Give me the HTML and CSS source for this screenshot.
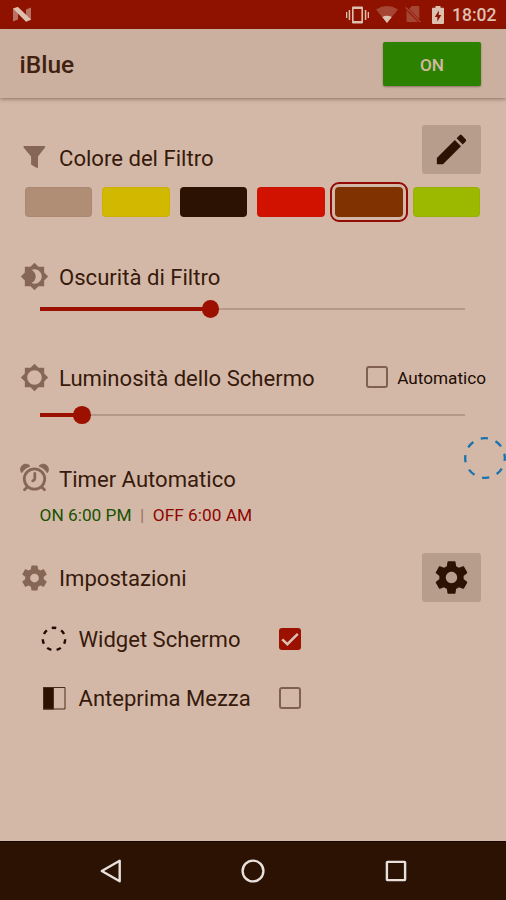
FILE: index.html
```html
<!DOCTYPE html>
<html lang="it">
<head>
<meta charset="utf-8">
<title>iBlue</title>
<link rel="stylesheet" href="styles.css">
</head>
<body>
<div class="screen">
  <div class="status">
    <svg class="n-logo" width="18" height="15" viewBox="0 0 18 15"><path opacity=".55" d="M0 1.5 5 0V12.500L0 14.500ZM13 2.500 18 .5V13L13 14.500Z"/><path d="M0 1.500 5 0 18 12.500 13 14.700Z"/></svg>
    <svg class="vib" width="23" height="18" viewBox="0 0 23 18"><path d="M0 6h1.300v6H0zM2.700 4H4.200v10H2.700zM18.800 4h1.500v10h-1.500zM21.700 6H23v6h-1.300z"/><path fill-rule="evenodd" d="M7 .5h9q1 0 1 1v15q0 1-1 1H7q-1 0-1-1v-15q0-1 1-1zM7.600 3v12h7.800V3z"/></svg>
    <svg class="wifi" width="22" height="17" viewBox="0 0 22 17"><path opacity=".3" d="M11 17 0 3.400Q11-3.400 22 3.400Z"/><path d="M11 17 6.200 11Q11 8.600 15.800 11Z"/></svg>
    <svg class="sim" width="16" height="17" viewBox="0 0 16 17"><path opacity=".3" d="M4 3 7 0h6q1.300 0 1.300 1.300V13.200ZM1.500 4.500 13 16H2.800Q1.500 16 1.500 14.700Z"/><path opacity=".3" d="M.2 1.900 1.200.9 15.800 15.500 14.800 16.500Z"/></svg>
    <svg class="batt" width="12" height="18" viewBox="0 0 12 18"><path fill-rule="evenodd" d="M3.500 0h5v1.800H11q1 0 1 1V17q0 1-1 1H1q-1 0-1-1V2.800q0-1 1-1h2.500zM6.800 4.600 2.800 11h2.500v4.600L9.400 9H6.800z"/></svg>
    <span class="clock">18:02</span>
  </div>
  <header class="bar">
    <h1>iBlue</h1>
    <button class="on">ON</button>
  </header>
  <main>
    <section class="color">
      <div class="row">
        <svg class="ico" width="30" height="30" viewBox="0 0 30 30"><path d="M4.500 4h20.300q1.700 0 .5 1.700L18.500 14.500V25.800H16.800L11.600 22.500V14.500L4.300 5.700Q3.200 4 4.500 4Z"/></svg>
        <h2>Colore del Filtro</h2>
        <button class="tool edit"><svg width="39" height="39" viewBox="0 0 24 24"><path d="M3 17.250V21h3.750L17.810 9.940l-3.750-3.750L3 17.250zM20.710 7.040c.39-.39.39-1.020 0-1.410l-2.340-2.340c-.39-.39-1.020-.39-1.410 0l-1.830 1.830 3.750 3.750 1.830-1.830z"/></svg></button>
      </div>
      <div class="swatches">
        <i class="sw tan"></i><i class="sw yellow"></i><i class="sw dark"></i><i class="sw red"></i><i class="sw brown selected"></i><i class="sw lime"></i>
      </div>
    </section>
    <section class="darkness">
      <div class="row">
        <svg class="ico" width="29" height="29" viewBox="0 0 24 24"><path d="M20 8.690V4h-4.690L12 .69 8.690 4H4v4.690L.69 12 4 15.310V20h4.690L12 23.310 15.310 20H20v-4.690L23.310 12 20 8.690zM12 18c-.89 0-1.740-.2-2.500-.55C11.560 16.500 13 14.420 13 12s-1.440-4.500-3.500-5.450C10.260 6.200 11.110 6 12 6c3.310 0 6 2.690 6 6s-2.690 6-6 6z"/></svg>
        <h2>Oscurità di Filtro</h2>
      </div>
      <div class="slider"><div class="fill" style="width:171px"></div><div class="thumb"></div><div class="rest"></div></div>
    </section>
    <section class="brightness">
      <div class="row">
        <svg class="ico" width="29" height="29" viewBox="0 0 24 24"><path d="M20 8.690V4h-4.690L12 .69 8.690 4H4v4.690L.69 12 4 15.310V20h4.690L12 23.310 15.310 20H20v-4.690L23.310 12 20 8.690zM12 18c-3.310 0-6-2.690-6-6s2.690-6 6-6 6 2.690 6 6-2.690 6-6 6z"/></svg>
        <h2>Luminosità dello Schermo</h2>
        <div class="auto"><i class="box"></i><span>Automatico</span></div>
      </div>
      <div class="slider"><div class="fill" style="width:42.500px"></div><div class="thumb"></div><div class="rest"></div></div>
    </section>
    <section class="timer">
      <div class="row">
        <svg class="ico" width="30" height="30" viewBox="0 0 30 30"><g fill="none" stroke="currentColor"><circle cx="15" cy="16" r="10.200" stroke-width="2.800"/><path stroke-width="2.800" stroke-linecap="round" d="M15.300 10.500V15.200Q15.300 17 13.200 17.800M7.300 24.400 5 26.700M22.700 24.400 25 26.700"/></g><path d="M2.200 9.800A5 5 0 0 1 10.500 3.100Q5 5 2.200 9.800ZM27.800 9.800A5 5 0 0 0 19.500 3.100Q25 5 27.800 9.800Z" stroke="currentColor" stroke-width=".8" stroke-linejoin="round"/></svg>
        <h2>Timer Automatico</h2>
      </div>
      <p class="times"><span class="t-on">ON 6:00 PM</span><span class="sep">|</span><span class="t-off">OFF 6:00 AM</span></p>
    </section>
    <section class="settings">
      <div class="row">
        <svg class="ico" width="30" height="30" viewBox="0 0 24 24"><use href="#gear"/></svg>
        <h2>Impostazioni</h2>
        <button class="tool"><svg width="39" height="39" viewBox="0 0 24 24"><path id="gear" d="M19.430 12.980c.04-.32.07-.64.07-.98s-.03-.66-.07-.98l2.110-1.650c.19-.15.24-.42.12-.64l-2-3.460c-.12-.22-.39-.3-.61-.22l-2.490 1c-.52-.4-1.080-.73-1.690-.98l-.38-2.650C14.460 2.180 14.250 2 14 2h-4c-.25 0-.46.18-.49.42l-.38 2.650c-.61.25-1.170.59-1.690.98l-2.490-1c-.23-.09-.49 0-.61.22l-2 3.460c-.13.22-.07.49.12.64l2.110 1.650c-.04.32-.07.65-.07.98s.03.66.07.98l-2.110 1.650c-.19.15-.24.42-.12.64l2 3.460c.12.22.39.3.61.22l2.490-1c.52.4 1.080.73 1.690.98l.38 2.650c.03.24.24.42.49.42h4c.25 0 .46-.18.49-.42l.38-2.650c.61-.25 1.170-.59 1.690-.98l2.490 1c.23.09.49 0 .61-.22l2-3.460c.12-.22.07-.49-.12-.64l-2.110-1.650zM12 15.500c-1.930 0-3.500-1.570-3.500-3.500s1.570-3.500 3.500-3.500 3.500 1.570 3.500 3.500-1.570 3.500-3.500 3.500z"/></svg></button>
      </div>
      <div class="option">
        <svg width="26" height="26" viewBox="0 0 26 26"><circle class="ring" cx="13" cy="13" r="11.200" pathLength="70"/></svg>
        <span>Widget Schermo</span>
        <i class="box checked"><svg width="22" height="22" viewBox="0 0 22 22"><path d="M3.200 11.300 8.400 16.200 18.800 5.800"/></svg></i>
      </div>
      <div class="option">
        <svg width="26" height="26" viewBox="0 0 26 26"><path class="half" d="M2 2.500H12.800V24.500H2Z"/><path class="frame" d="M2.500 2.500H24V24H2.500Z"/></svg>
        <span>Anteprima Mezza</span>
        <i class="box"></i>
      </div>
    </section>
  </main>
  <nav>
    <svg width="24" height="24" viewBox="0 0 24 24"><path d="M2.800 12 20.700 1.800V22.200Z"/></svg>
    <svg width="24" height="24" viewBox="0 0 24 24"><circle cx="12" cy="12" r="10.400"/></svg>
    <svg width="24" height="24" viewBox="0 0 24 24"><rect x="2.900" y="2.900" width="18.200" height="18.200" rx=".5"/></svg>
  </nav>
  <svg class="floating" width="44" height="44" viewBox="0 0 44 44"><circle cx="22" cy="22" r="19.800" pathLength="80"/></svg>
</div>
</body>
</html>
```

FILE: styles.css
```css
* { box-sizing: border-box; }
body { margin: 0; font-family: Roboto, sans-serif; color: #371a0b; }
h1, h2, p { margin: 0; }
button { border: 0; padding: 0; font: inherit; }
svg { display: block; flex: none; }
.screen { position: relative; width: 506px; height: 900px; display: flex; flex-direction: column; overflow: hidden; background: #d3b8a8; }

.status { height: 29px; flex: none; display: flex; align-items: center; background: #8f1200; padding: 0 10px 0 13px; color: #dcc0b0; }
.status svg { fill: #dcc0b0; }
.vib { margin-left: auto; }
.wifi { margin-left: 7px; }
.sim { margin-left: 7px; }
.batt { margin-left: 11px; }
.clock { width: 44px; margin-left: 8px; font-size: 17.500px; font-weight: 500; line-height: 29px; padding-top: 2px; white-space: nowrap; }

.bar { height: 69px; flex: none; display: flex; align-items: center; justify-content: space-between; padding: 0 25px 0 19.500px; background: #ccb09f; box-shadow: 0 1px 4px rgba(70, 35, 20, .5); }
.bar h1 { font-size: 24.500px; line-height: 30px; font-weight: 500; color: #41210f; padding-top: 3px; }
.on { width: 98px; height: 44px; padding-top: 2px; border-radius: 2px; background: #2d8100; color: #d3b8a0; font-size: 17.200px; font-weight: 500; box-shadow: 0 1px 2px rgba(60, 40, 20, .45); }

main { flex: 1; }
.row { display: flex; align-items: center; padding-left: 19px; height: 30px; }
.ico { width: 31px; color: #866756; fill: currentColor; }
.row h2 { margin-left: 9px; padding-top: 1px; font-size: 22.100px; line-height: 30px; font-weight: 400; white-space: nowrap; }
.tool { width: 59px; height: 49px; margin: -1px 25px 0 auto; border-radius: 3px; background: #b79d8c; display: flex; align-items: center; justify-content: center; fill: #2c1202; }
.tool.edit { margin-top: -15px; }

.color { height: 163px; padding-top: 44px; }
.color h2 { padding-top: 2px; }
.swatches { display: grid; grid-template-columns: repeat(6, 1fr); gap: 10px; margin: 15px 25.500px 0 24.500px; }
.sw { height: 29.500px; border-radius: 4px; border: 1px solid rgba(80, 40, 20, .05); }
.tan { background: #af8e75; }
.yellow { background: #d2b900; }
.dark { background: #2c1202; }
.red { background: #d21200; }
.brown { background: #803300; }
.lime { background: #9cb900; }
.selected { outline: 2px solid #930b05; outline-offset: 3px; }

.darkness { height: 101px; }
.slider { display: flex; align-items: center; height: 18px; margin: 8px 41px 0 39.500px; }
.darkness .slider { margin-top: 9px; }
.fill { height: 4px; background: #9c1000; }
.thumb { width: 17.500px; height: 17.500px; margin: 0 -8.750px; border-radius: 50%; background: #9c1000; flex: none; z-index: 1; }
.rest { flex: 1; height: 1.500px; background: #b59988; }

.brightness { height: 101px; }
.brightness .slider { margin-top: 14px; }
.auto { display: flex; align-items: center; margin: 0 20px 0 auto; gap: 9px; font-size: 17.200px; color: #210b02; }
.auto span { padding-top: 1px; }
.box { width: 22px; height: 22px; border: 2px solid #806150; border-radius: 3px; display: block; flex: none; }
.box.checked { border: 0; background: #9c1000; }
.checked path { fill: none; stroke: #dbc2b4; stroke-width: 2.500; }

.timer { height: 100px; }
.times { display: flex; margin: 8px 0 0 39.500px; font-size: 17.300px; line-height: 28px; }
.t-on { color: #1a5200; }
.t-off { color: #8f0500; }
.sep { margin: 0 8.500px; color: #937463; }

.settings .row h2 { padding-top: 0; }
.option { display: flex; align-items: center; height: 59px; padding-left: 41px; font-size: 22.050px; }
.settings .row + .option { margin-top: 16px; }
.option span { width: 200px; margin-left: 11.500px; padding-top: 2px; white-space: nowrap; }
.option .box { margin-left: .500px; }
.ring { fill: none; stroke: #210b02; stroke-width: 2.400; stroke-dasharray: 4.600 5.400; stroke-dashoffset: 2.300; transform: rotate(-90deg); transform-origin: center; }
.half { fill: #2c1202; }
.frame { fill: none; stroke: #4a2a19; stroke-width: 1; }

nav { height: 59px; flex: none; display: flex; align-items: center; justify-content: space-between; padding: 0 98.500px 0 99px; background: #2c1202; border-top: 1px solid #160500; }
nav svg { fill: none; stroke: #e8e0dc; stroke-width: 2.400; stroke-linejoin: round; }

.floating { position: absolute; left: 462.600px; top: 436.300px; }
.floating circle { fill: none; stroke: #1b73ae; stroke-width: 2.300; stroke-dasharray: 4.800 5.200; stroke-dashoffset: 2.400; transform: rotate(-92deg); transform-origin: center; }
```
